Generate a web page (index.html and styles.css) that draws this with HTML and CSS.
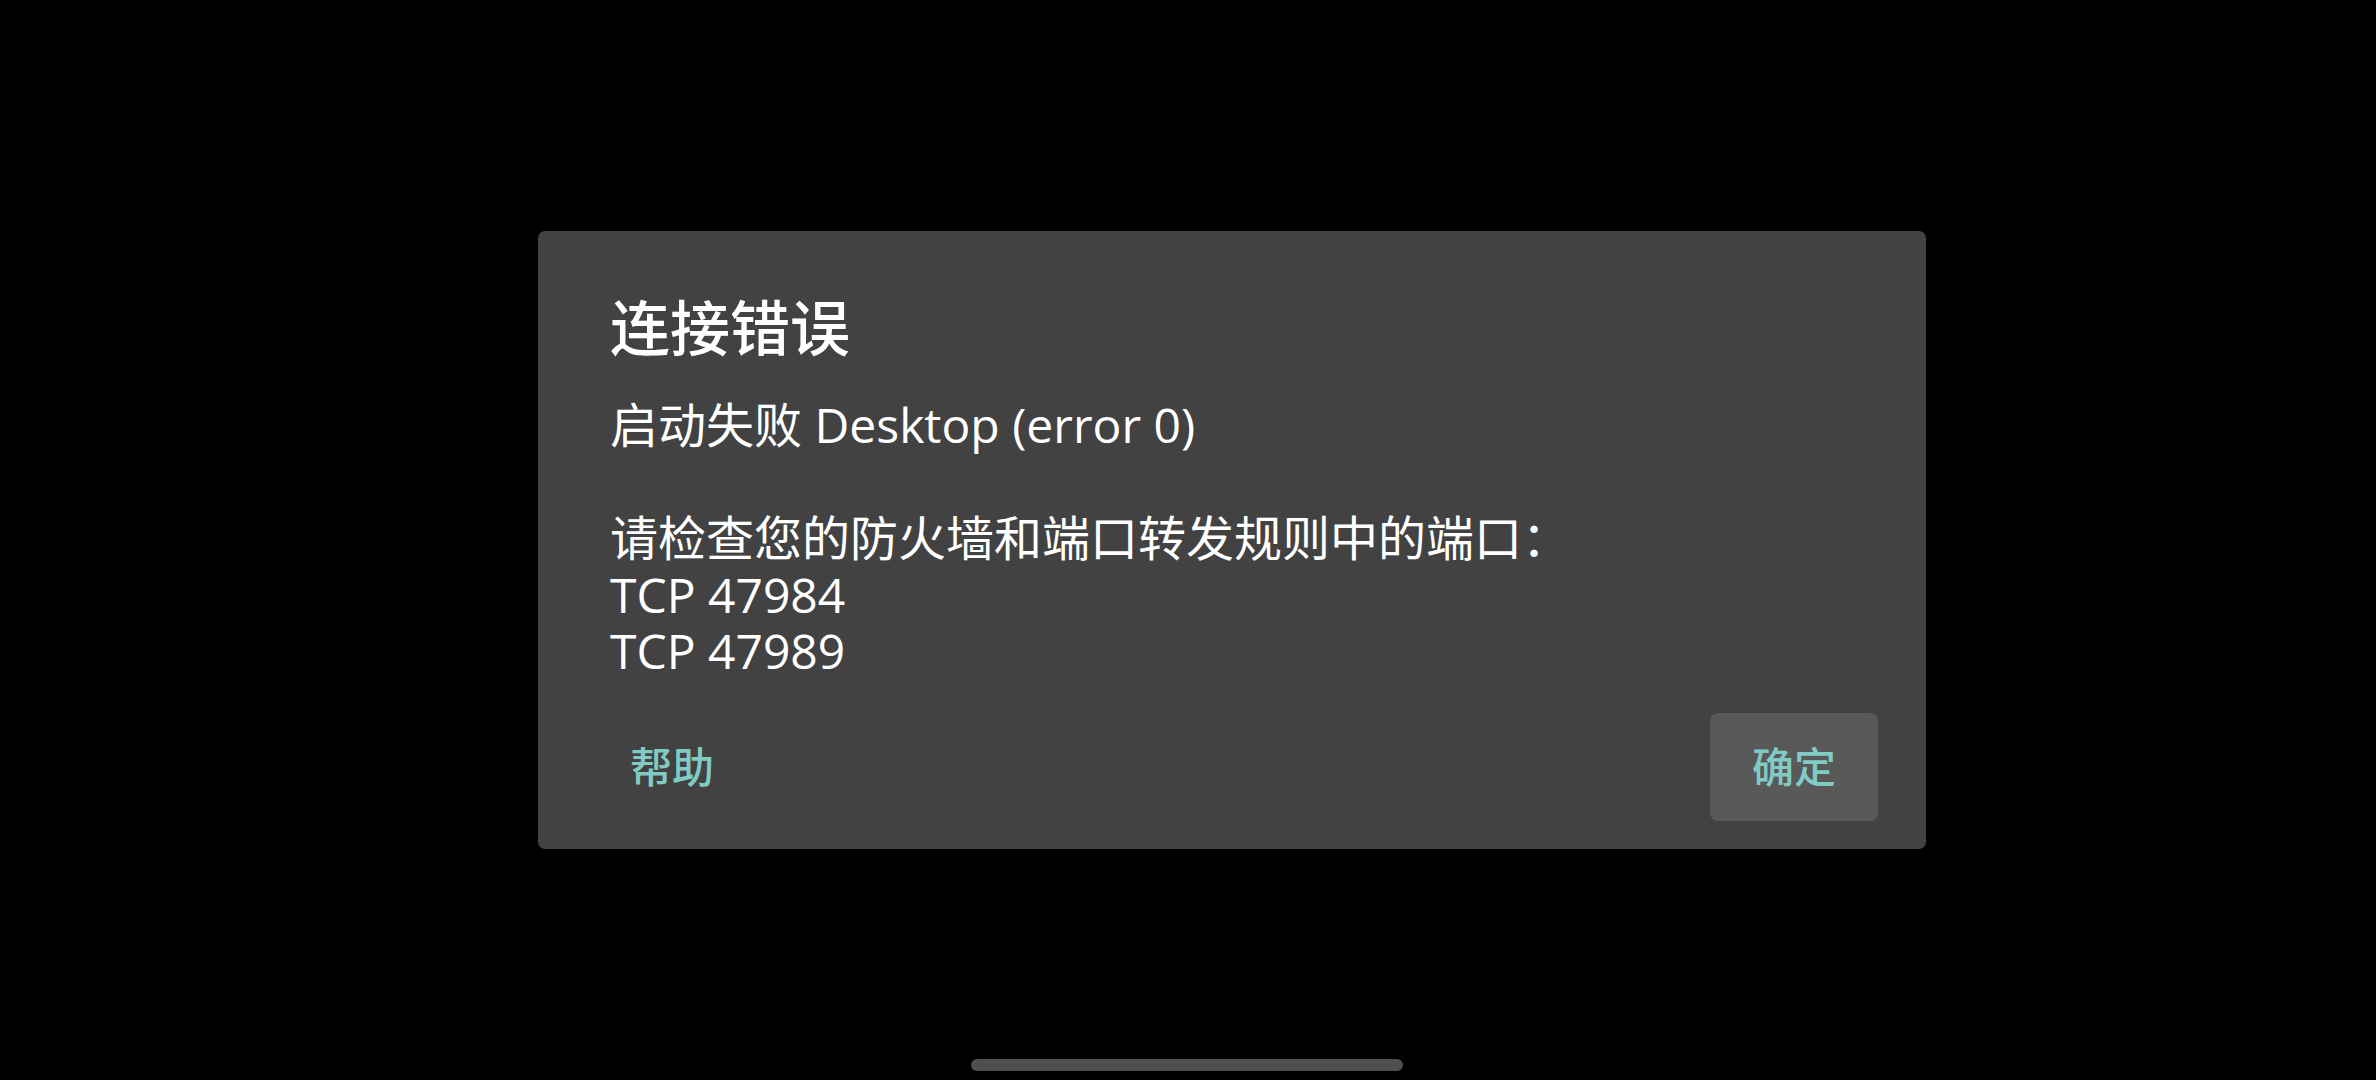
FILE: index.html
```html
<!DOCTYPE html>
<html lang="zh-CN">
<head>
<meta charset="utf-8">
<title>连接错误</title>
<link rel="stylesheet" href="styles.css">
</head>
<body>
<div class="screen">
  <div class="dialog">
    <h1 class="dialog-title">连接错误</h1>
    <div class="dialog-message">
      <p class="msg-line">启动失败 Desktop (error 0)</p>
      <p class="msg-line msg-gap">请检查您的防火墙和端口转发规则中的端口：<br>TCP 47984<br>TCP 47989</p>
    </div>
    <div class="dialog-actions">
      <button class="btn">帮助</button>
      <button class="btn btn-focused">确定</button>
    </div>
  </div>
  <div class="gesture-bar"></div>
</div>
</body>
</html>
```
FILE: styles.css
```css
html, body {
  margin: 0;
  padding: 0;
  background: #000;
  width: 100%;
  height: 100%;
}

.screen {
  position: relative;
  box-sizing: border-box;
  width: 2376px;
  height: 1080px;
  padding-left: 88px;
  display: flex;
  align-items: center;
  justify-content: center;
  font-family: "Open Sans", "Noto Sans CJK SC", sans-serif;
  color: #fff;
}

.dialog {
  box-sizing: border-box;
  width: 1388px;
  height: 618px;
  background: #424242;
  border-radius: 7px;
  padding: 62px 0 29px 0;
  display: flex;
  flex-direction: column;
}

.dialog-title {
  margin: 0;
  padding: 0 72px;
  font-size: 60px;
  line-height: 70px;
  font-weight: 500;
  color: #fff;
}

.dialog-message {
  margin-top: 34px;
  padding: 0 72px;
  font-size: 48px;
  line-height: 56.5px;
  font-weight: 400;
  color: #fff;
}

.msg-line {
  margin: 0;
}

.msg-gap {
  margin-top: 56.5px;
}

.dialog-actions {
  margin-top: 33px;
  padding: 0 48px 0 50px;
  display: flex;
  justify-content: space-between;
  align-items: center;
}

.btn {
  height: 108px;
  min-width: 168px;
  padding: 0 42px;
  border: 0;
  border-radius: 8px;
  background: transparent;
  color: #80cbc4;
  font-family: "Open Sans", "Noto Sans CJK SC", sans-serif;
  font-size: 42px;
  font-weight: 500;
  line-height: 108px;
}

.btn-focused {
  background: #595959;
}

.gesture-bar {
  position: absolute;
  left: 971px;
  top: 1059px;
  width: 432px;
  height: 12px;
  border-radius: 6px;
  background: #4f4f4f;
}
```
